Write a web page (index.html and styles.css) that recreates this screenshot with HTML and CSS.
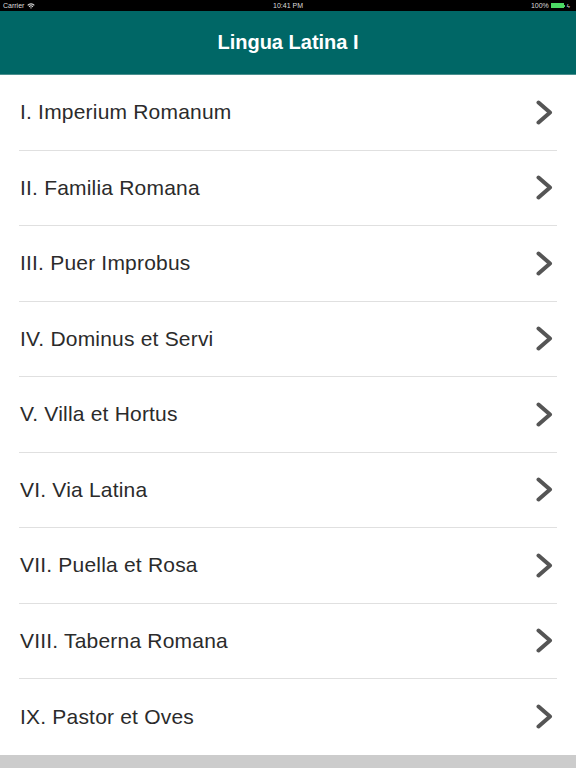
FILE: index.html
```html
<!DOCTYPE html>
<html>
<head>
<meta charset="utf-8">
<link rel="stylesheet" href="styles.css">
</head>
<body>
<div class="app">
  <div class="status">
    <div class="st-left">Carrier <svg class="wifi" width="8" height="6" viewBox="0 0 8 6"><path d="M0.3 2 A5 5 0 0 1 7.7 2 L6.9 2.8 A3.9 3.9 0 0 0 1.1 2.8Z M1.7 3.4 A3 3 0 0 1 6.3 3.4 L5.5 4.2 A1.9 1.9 0 0 0 2.5 4.2Z M3.1 4.8 A1.1 1.1 0 0 1 4.9 4.8 L4 5.8Z" fill="#ddd"/></svg></div>
    <div class="st-mid">10:41 PM</div>
    <div class="st-right">100% <span class="battery"><span class="fill"></span></span><span class="nub"></span><span class="bolt">ϟ</span></div>
  </div>
  <header class="nav"><h1>Lingua Latina I</h1></header>
  <ul class="list">
    <li><span>I. Imperium Romanum</span><svg class="chev" viewBox="0 0 17 25"><path d="M2.5 2.5 L14 12.5 L2.5 22.5" fill="none" stroke="#555" stroke-width="4" stroke-linecap="round" stroke-linejoin="round"/></svg></li>
    <li><span>II. Familia Romana</span><svg class="chev" viewBox="0 0 17 25"><path d="M2.5 2.5 L14 12.5 L2.5 22.5" fill="none" stroke="#555" stroke-width="4" stroke-linecap="round" stroke-linejoin="round"/></svg></li>
    <li><span>III. Puer Improbus</span><svg class="chev" viewBox="0 0 17 25"><path d="M2.5 2.5 L14 12.5 L2.5 22.5" fill="none" stroke="#555" stroke-width="4" stroke-linecap="round" stroke-linejoin="round"/></svg></li>
    <li><span>IV. Dominus et Servi</span><svg class="chev" viewBox="0 0 17 25"><path d="M2.5 2.5 L14 12.5 L2.5 22.5" fill="none" stroke="#555" stroke-width="4" stroke-linecap="round" stroke-linejoin="round"/></svg></li>
    <li><span>V. Villa et Hortus</span><svg class="chev" viewBox="0 0 17 25"><path d="M2.5 2.5 L14 12.5 L2.5 22.5" fill="none" stroke="#555" stroke-width="4" stroke-linecap="round" stroke-linejoin="round"/></svg></li>
    <li><span>VI. Via Latina</span><svg class="chev" viewBox="0 0 17 25"><path d="M2.5 2.5 L14 12.5 L2.5 22.5" fill="none" stroke="#555" stroke-width="4" stroke-linecap="round" stroke-linejoin="round"/></svg></li>
    <li><span>VII. Puella et Rosa</span><svg class="chev" viewBox="0 0 17 25"><path d="M2.5 2.5 L14 12.5 L2.5 22.5" fill="none" stroke="#555" stroke-width="4" stroke-linecap="round" stroke-linejoin="round"/></svg></li>
    <li><span>VIII. Taberna Romana</span><svg class="chev" viewBox="0 0 17 25"><path d="M2.5 2.5 L14 12.5 L2.5 22.5" fill="none" stroke="#555" stroke-width="4" stroke-linecap="round" stroke-linejoin="round"/></svg></li>
    <li class="last"><span>IX. Pastor et Oves</span><svg class="chev" viewBox="0 0 17 25"><path d="M2.5 2.5 L14 12.5 L2.5 22.5" fill="none" stroke="#555" stroke-width="4" stroke-linecap="round" stroke-linejoin="round"/></svg></li>
  </ul>
  <div class="bottom"></div>
</div>
</body>
</html>
```
FILE: styles.css
```css
* { box-sizing: border-box; }
html, body { margin: 0; padding: 0; }
body { font-family: "Liberation Sans", Arial, sans-serif; background: #fff; }
.app { width: 576px; height: 768px; display: flex; flex-direction: column; overflow: hidden; }
.status { height: 11px; background: #000; color: #ddd; font-size: 7px; display: flex; align-items: center; justify-content: space-between; padding: 0 6px 0 3px; position: relative; }
.st-left { display: flex; align-items: center; gap: 3px; }
.st-mid { position: absolute; left: 0; right: 0; text-align: center; }
.st-right { display: flex; align-items: center; }
.battery { width: 13px; height: 5px; border: 1px solid #4cd964; margin-left: 2px; display: inline-flex; padding: 0; }
.fill { flex: 1; background: #4cd964; }
.nub { width: 1px; height: 2px; background: #4cd964; }
.bolt { font-size: 6px; margin-left: 2px; color: #ddd; }
.nav { height: 64px; background: #006766; border-bottom: 1px solid #4a8f8e; display: flex; align-items: center; justify-content: center; }
.nav h1 { margin: 0; color: #fff; font-size: 20px; font-weight: bold; }
.list { list-style: none; margin: 0; padding: 0 19px; flex: 1; }
.list li { height: 75.5px; display: flex; align-items: center; justify-content: space-between; border-bottom: 1px solid #e0e0e0; font-size: 21px; letter-spacing: 0.2px; color: #2b2b2b; }
.list li span { padding-left: 1px; }
.list li.last { border-bottom: none; }
.chev { width: 17px; height: 25px; margin-right: 4px; }
.bottom { height: 13px; background: #cccccc; }
```
